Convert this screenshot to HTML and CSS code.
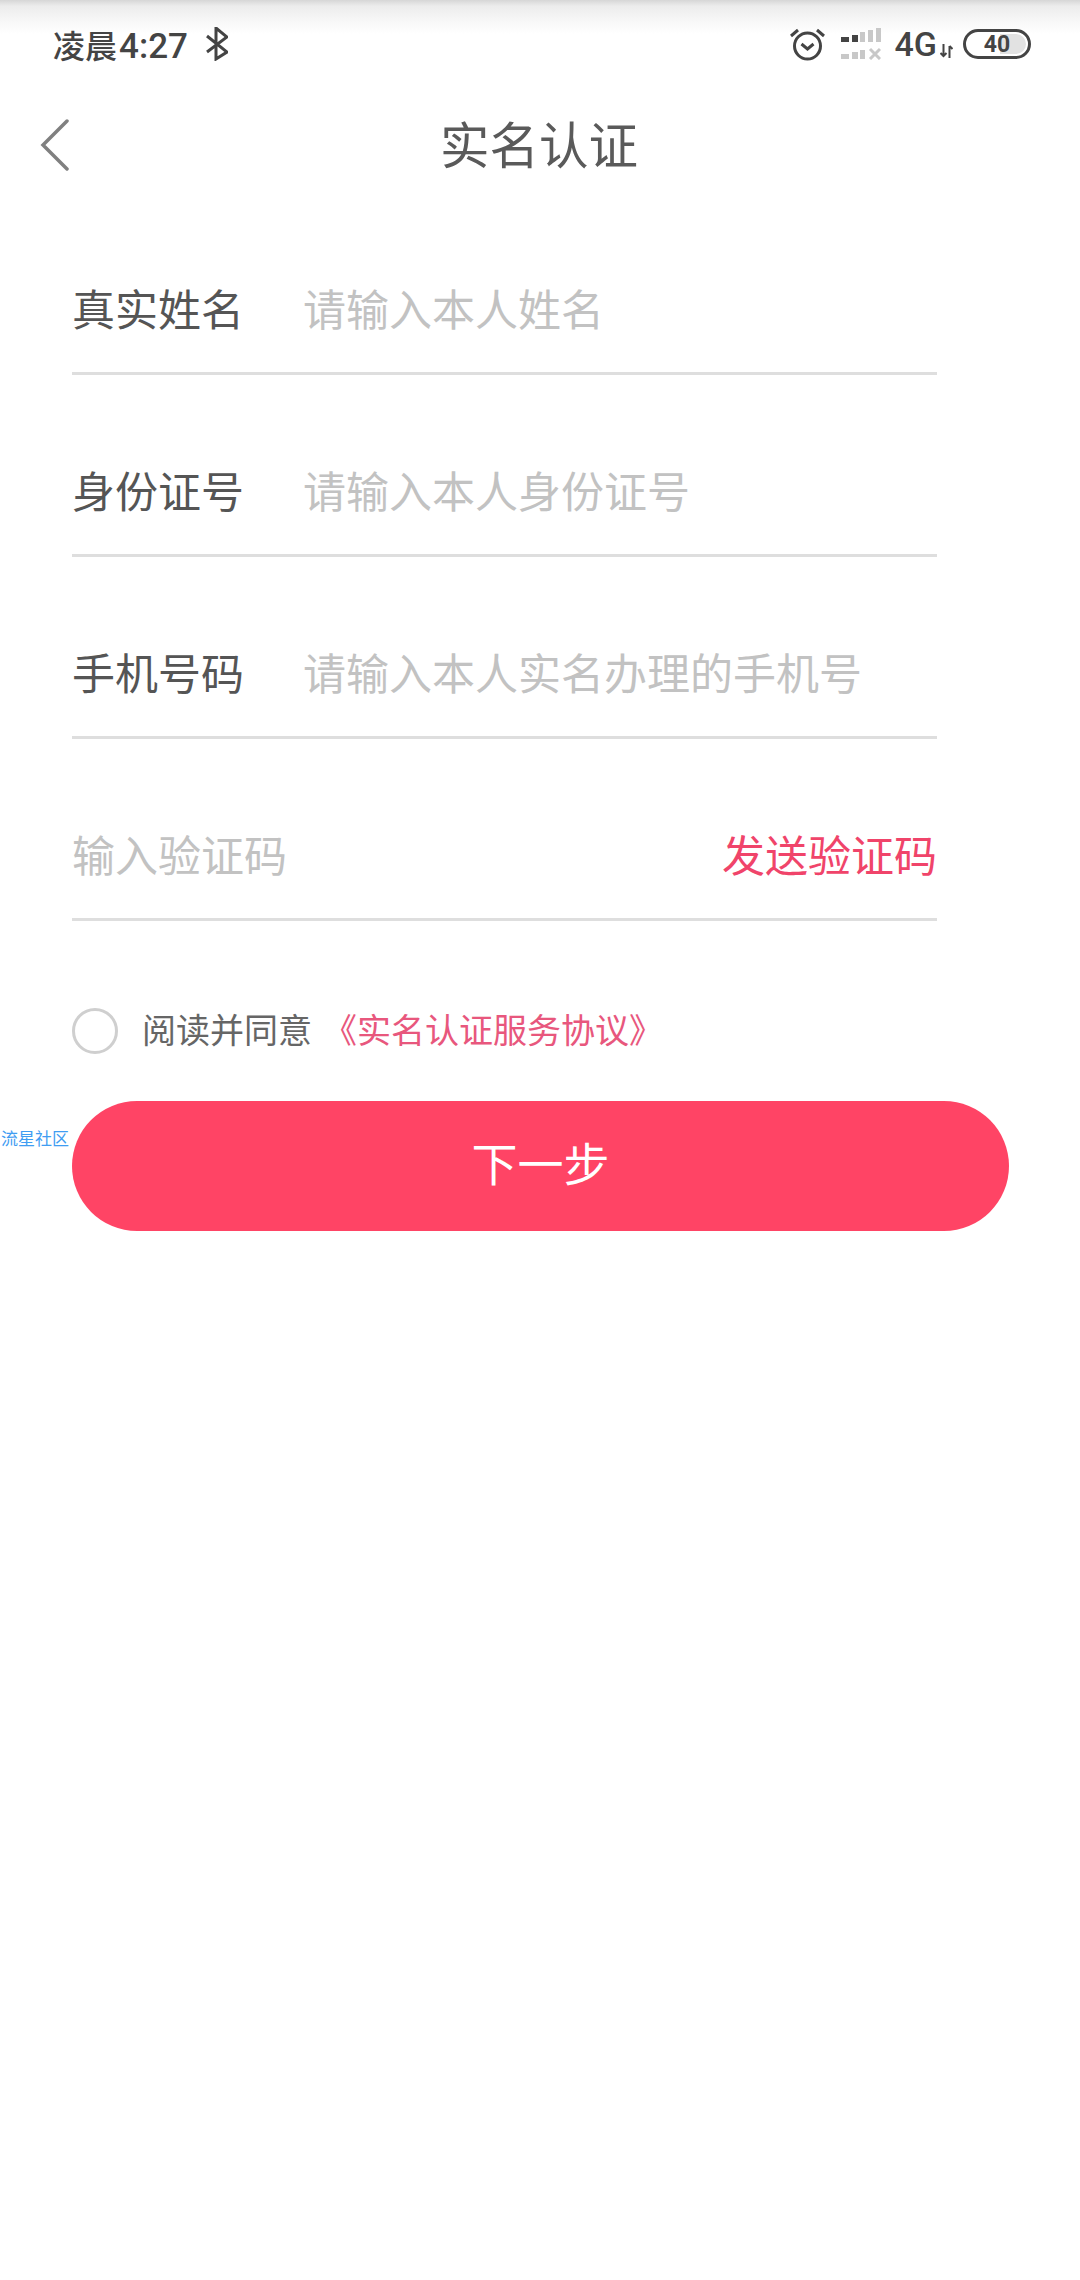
FILE: index.html
```html
<!DOCTYPE html>
<html lang="zh-CN">
<head>
  <meta charset="UTF-8">
  <meta name="viewport" content="width=device-width, initial-scale=1.0">
  <title>实名认证</title>
  <link rel="stylesheet" href="styles.css">
</head>
<body>
  <div class="status-bar">
    <div class="status-left">
      <span class="time"><span class="time-cjk">凌晨</span>4:27</span>
      <svg class="bt-icon" width="22" height="34" viewBox="0 0 22 34"><path d="M1 25 L21 10 L10 1 L10 32 L21 25 L1 9" fill="none" stroke="#444" stroke-width="3"/></svg>
    </div>
    <div class="status-right">
      <svg width="35" height="34" viewBox="0 0 35 34"><circle cx="17.500" cy="19" r="13" fill="none" stroke="#444" stroke-width="3"/><path d="M11.500 17 L17.500 22 L23.500 17" fill="none" stroke="#444" stroke-width="3"/><path d="M1 9 L8 3 M27 3 L34 9" stroke="#444" stroke-width="3"/></svg>
      <svg class="signal" width="40" height="32" viewBox="0 0 40 32"><path d="M0 9h8v5H0z M11 7h6v7h-6z" fill="#444"/><path d="M19 4h5v10h-5z M27 2h5v12h-5z M35 0h5v14h-5z M0 26h8v5H0z M11 24h6v7h-6z M19 22h5v9h-5z" fill="#c8c8c8"/><path d="M29 21 L39 31 M39 21 L29 31" stroke="#c8c8c8" stroke-width="3"/></svg>
      <span class="net">4G</span>
      <svg class="updown" width="13" height="14" viewBox="0 0 13 14"><path d="M3.500 0v12 M0.500 9l3 3 3-3 M9.500 14V2 M9.500 2l3 3" fill="none" stroke="#444" stroke-width="2"/></svg>
      <div class="battery"><div class="battery-fill"></div><span class="battery-num">40</span></div>
    </div>
  </div>

  <div class="title-bar">
    <svg class="back-icon" width="30" height="52" viewBox="0 0 30 52"><path d="M27 2 L3 26 L27 50" fill="none" stroke="#808080" stroke-width="3.500" stroke-linecap="round"/></svg>
    <h1>实名认证</h1>
  </div>

  <form class="form">
    <div class="row">
      <label>真实姓名</label>
      <span class="hint">请输入本人姓名</span>
    </div>
    <div class="row">
      <label>身份证号</label>
      <span class="hint">请输入本人身份证号</span>
    </div>
    <div class="row">
      <label>手机号码</label>
      <span class="hint">请输入本人实名办理的手机号</span>
    </div>
    <div class="row code-row">
      <span class="hint">输入验证码</span>
      <span class="send">发送验证码</span>
    </div>
  </form>

  <div class="agree">
    <span class="radio"></span>
    <span class="agree-text">阅读并同意</span>
    <span class="agree-link">《实名认证服务协议》</span>
  </div>

  <div class="next-wrap">
    <span class="watermark">流星社区</span>
    <button class="next" type="button">下一步</button>
  </div>
</body>
</html>
```

FILE: styles.css
```css
body {
  margin: 0;
  width: 1080px;
  height: 2280px;
  overflow: hidden;
  background-color: #ffffff;
  font-family: "Noto Sans CJK SC", "Noto Sans", sans-serif;
}

.status-bar {
  height: 90px;
  box-sizing: border-box;
  padding: 22px 49px 0 53px;
  display: flex;
  justify-content: space-between;
  align-items: flex-start;
  background: linear-gradient(#d6d6d6 0, #ececec 6px, #f8f8f8 22px, #ffffff 34px);
}

.status-left, .status-right {
  display: flex;
  align-items: center;
  height: 44px;
}

.time {
  font-family: Roboto, "Noto Sans CJK SC", sans-serif;
  font-size: 35px;
  font-weight: 500;
  color: #444444;
}

.time-cjk {
  font-size: 32px;
  margin-right: 2px;
}

.bt-icon {
  margin-left: 18px;
}

.signal {
  margin-left: 16px;
}

.net {
  font-family: Roboto, sans-serif;
  font-size: 34px;
  font-weight: 500;
  color: #444444;
  margin-left: 14px;
}

.updown {
  margin: 14px 10px 0 3px;
}

.battery {
  position: relative;
  width: 68px;
  height: 30px;
  box-sizing: border-box;
  border: 3px solid #444444;
  border-radius: 15px;
  display: flex;
  align-items: center;
  justify-content: center;
}

.battery-fill {
  position: absolute;
  top: 2px;
  bottom: 2px;
  right: 2px;
  width: 26px;
  background-color: #e2e2e2;
  border-radius: 0 10px 10px 0;
}

.battery-num {
  position: relative;
  font-family: Roboto, sans-serif;
  font-size: 23px;
  font-weight: 700;
  color: #444444;
}

.title-bar {
  position: relative;
  height: 110px;
  display: flex;
  align-items: center;
  justify-content: center;
}

.title-bar h1 {
  margin: 0 2px 6px 0;
  font-size: 49.5px;
  font-weight: 400;
  color: #5a5a5a;
}

.back-icon {
  position: absolute;
  left: 40px;
  top: 29px;
}

.form {
  width: 865px;
  margin: 0 0 0 72px;
  padding-top: 0;
}

.row {
  height: 182px;
  box-sizing: border-box;
  border-bottom: 3px solid #dedede;
  display: flex;
  align-items: flex-end;
  padding-bottom: 35px;
  font-size: 43px;
  line-height: 60px;
}

.row:first-child {
  height: 175px;
}

.row label {
  width: 231px;
  color: #555555;
}

.hint {
  color: #c2c2c2;
}

.code-row {
  justify-content: space-between;
}

.send {
  color: #f0446a;
}

.agree {
  display: flex;
  align-items: center;
  margin: 82px 0 0 72px;
  height: 50px;
  font-size: 34px;
}

.radio {
  width: 46px;
  height: 46px;
  margin: 6px 24px 0 0;
  box-sizing: border-box;
  border: 3px solid #cfcfcf;
  border-radius: 50%;
}

.agree-text {
  color: #666666;
}

.agree-link {
  color: #e8577d;
  margin-left: 11px;
}

.next-wrap {
  position: relative;
  margin: 48px 0 0 72px;
}

.watermark {
  position: absolute;
  left: -71px;
  top: 26px;
  font-size: 17px;
  line-height: 22px;
  color: #3f9df2;
}

.next {
  display: block;
  width: 937px;
  height: 130px;
  padding-bottom: 12px;
  border: none;
  border-radius: 65px;
  background-color: #ff4465;
  color: #ffffff;
  font-family: inherit;
  font-size: 46px;
}
```
